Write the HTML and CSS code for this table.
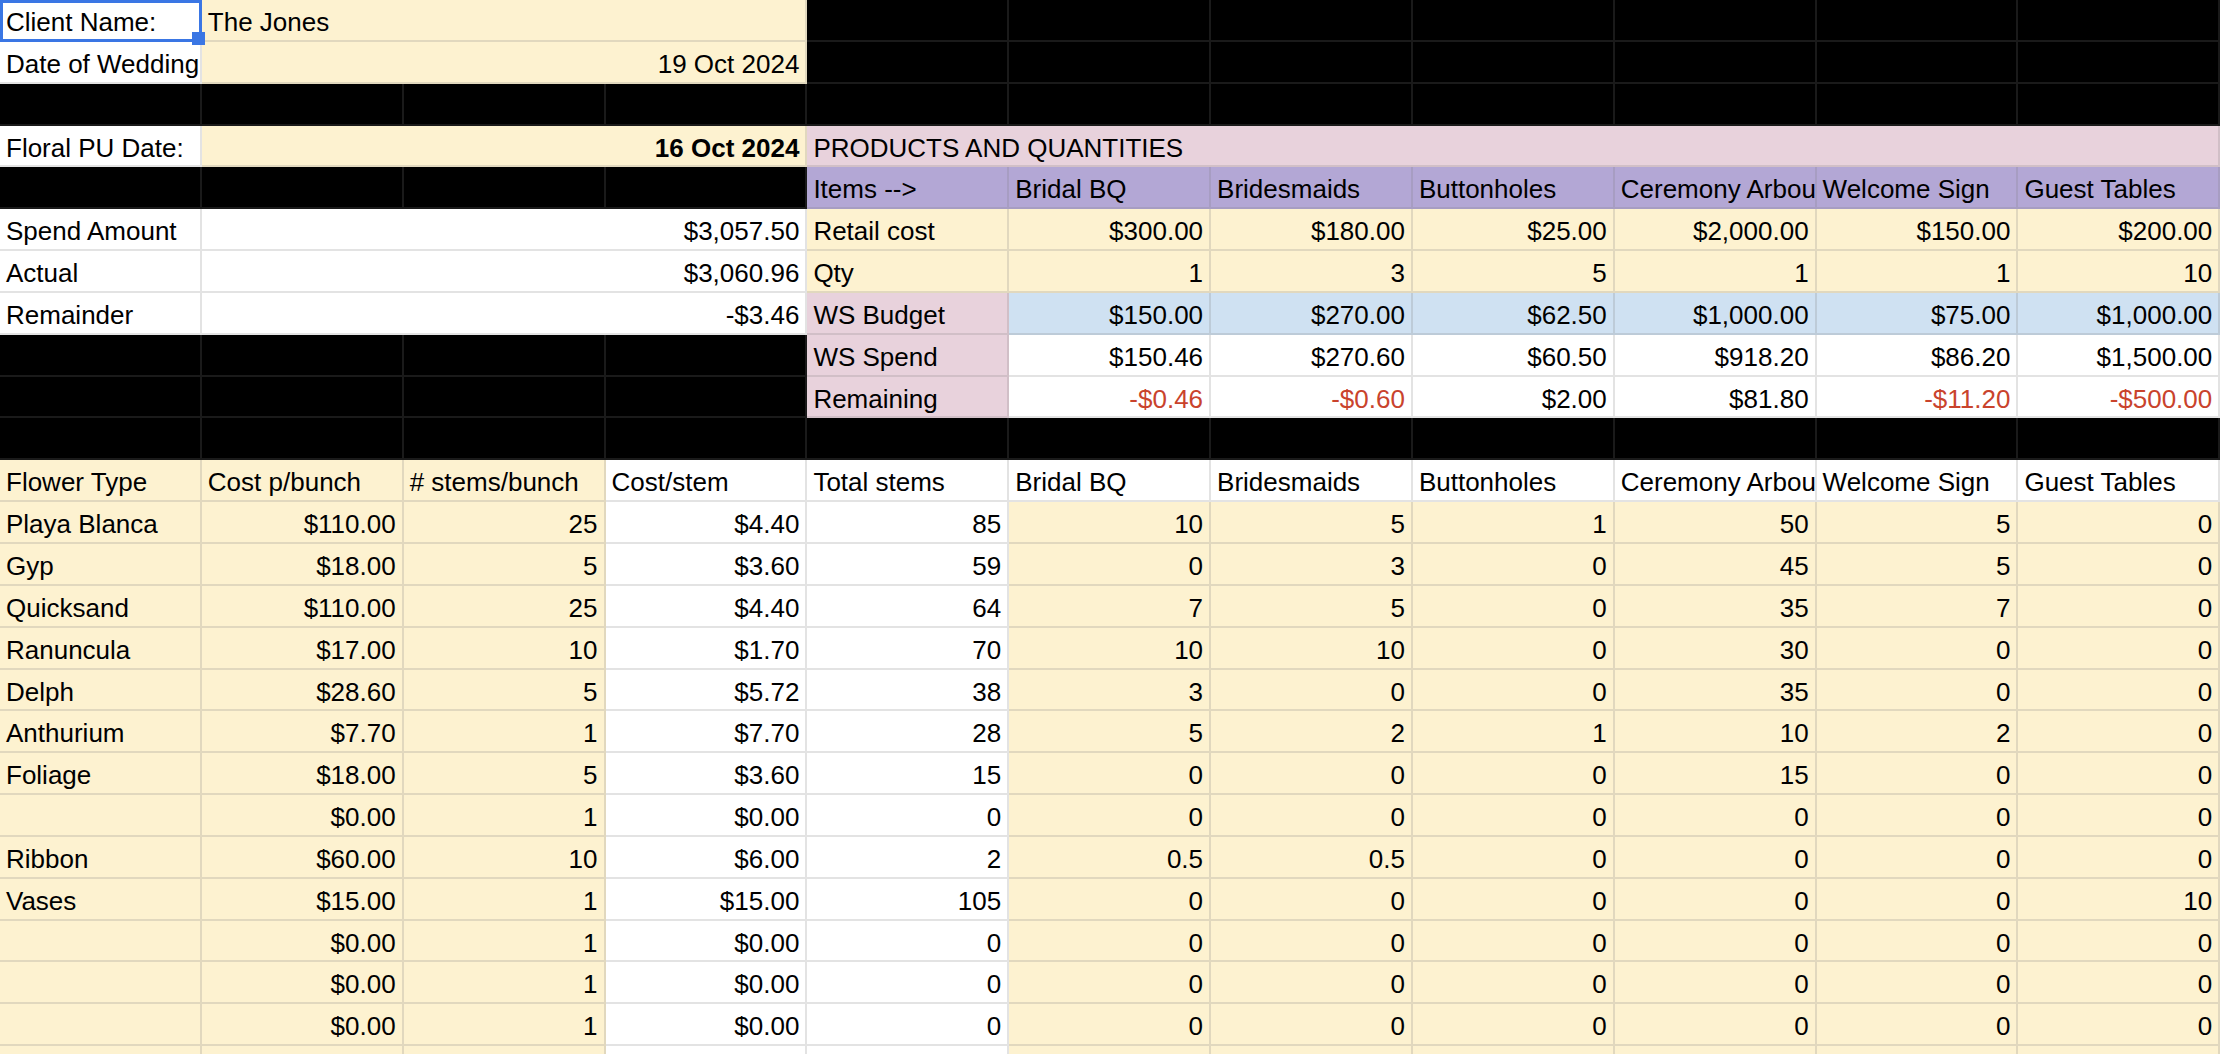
FILE: index.html
```html
<!DOCTYPE html>
<html lang="en">
<head>
<meta charset="utf-8">
<title>Wedding Floral Budget</title>
<link rel="stylesheet" href="styles.css">
</head>
<body>
<div class="sheet">
  <!-- Row 1 -->
  <div class="c w sel">Client Name:<span class="selbox"><span class="handle"></span></span></div>
  <div class="c y s3">The Jones</div>
  <div class="c x"></div><div class="c x"></div><div class="c x"></div><div class="c x"></div><div class="c x"></div><div class="c x"></div><div class="c x"></div>
  <!-- Row 2 -->
  <div class="c w">Date of Wedding</div>
  <div class="c y s3 r">19 Oct 2024</div>
  <div class="c x"></div><div class="c x"></div><div class="c x"></div><div class="c x"></div><div class="c x"></div><div class="c x"></div><div class="c x"></div>
  <!-- Row 3 -->
  <div class="c x"></div><div class="c x"></div><div class="c x"></div><div class="c x"></div><div class="c x"></div><div class="c x"></div><div class="c x"></div><div class="c x"></div><div class="c x"></div><div class="c x"></div><div class="c x"></div>
  <!-- Row 4 -->
  <div class="c w">Floral PU Date:</div>
  <div class="c y s3 r bold">16 Oct 2024</div>
  <div class="c k s7">PRODUCTS AND QUANTITIES</div>
  <!-- Row 5 -->
  <div class="c x"></div><div class="c x"></div><div class="c x"></div><div class="c x"></div>
  <div class="c p">Items --&gt;</div>
  <div class="c p">Bridal BQ</div>
  <div class="c p">Bridesmaids</div>
  <div class="c p">Buttonholes</div>
  <div class="c p">Ceremony Arbour</div>
  <div class="c p">Welcome Sign</div>
  <div class="c p">Guest Tables</div>
  <!-- Row 6 -->
  <div class="c w">Spend Amount</div>
  <div class="c w s3 r">$3,057.50</div>
  <div class="c y">Retail cost</div>
  <div class="c y r">$300.00</div><div class="c y r">$180.00</div><div class="c y r">$25.00</div><div class="c y r">$2,000.00</div><div class="c y r">$150.00</div><div class="c y r">$200.00</div>
  <!-- Row 7 -->
  <div class="c w">Actual</div>
  <div class="c w s3 r">$3,060.96</div>
  <div class="c y">Qty</div>
  <div class="c y r">1</div><div class="c y r">3</div><div class="c y r">5</div><div class="c y r">1</div><div class="c y r">1</div><div class="c y r">10</div>
  <!-- Row 8 -->
  <div class="c w">Remainder</div>
  <div class="c w s3 r">-$3.46</div>
  <div class="c k">WS Budget</div>
  <div class="c b r">$150.00</div><div class="c b r">$270.00</div><div class="c b r">$62.50</div><div class="c b r">$1,000.00</div><div class="c b r">$75.00</div><div class="c b r">$1,000.00</div>
  <!-- Row 9 -->
  <div class="c x"></div><div class="c x"></div><div class="c x"></div><div class="c x"></div>
  <div class="c k">WS Spend</div>
  <div class="c w r">$150.46</div><div class="c w r">$270.60</div><div class="c w r">$60.50</div><div class="c w r">$918.20</div><div class="c w r">$86.20</div><div class="c w r">$1,500.00</div>
  <!-- Row 10 -->
  <div class="c x"></div><div class="c x"></div><div class="c x"></div><div class="c x"></div>
  <div class="c k">Remaining</div>
  <div class="c w r neg">-$0.46</div><div class="c w r neg">-$0.60</div><div class="c w r">$2.00</div><div class="c w r">$81.80</div><div class="c w r neg">-$11.20</div><div class="c w r neg">-$500.00</div>
  <!-- Row 11 -->
  <div class="c x"></div><div class="c x"></div><div class="c x"></div><div class="c x"></div><div class="c x"></div><div class="c x"></div><div class="c x"></div><div class="c x"></div><div class="c x"></div><div class="c x"></div><div class="c x"></div>
  <!-- Row 12 -->
  <div class="c y">Flower Type</div>
  <div class="c y">Cost p/bunch</div>
  <div class="c y"># stems/bunch</div>
  <div class="c w">Cost/stem</div>
  <div class="c w">Total stems</div>
  <div class="c w">Bridal BQ</div>
  <div class="c w">Bridesmaids</div>
  <div class="c w">Buttonholes</div>
  <div class="c w">Ceremony Arbour</div>
  <div class="c w">Welcome Sign</div>
  <div class="c w">Guest Tables</div>
  <!-- Row 13 -->
  <div class="c y">Playa Blanca</div><div class="c y r">$110.00</div><div class="c y r">25</div><div class="c w r">$4.40</div><div class="c w r">85</div>
  <div class="c y r">10</div><div class="c y r">5</div><div class="c y r">1</div><div class="c y r">50</div><div class="c y r">5</div><div class="c y r">0</div>
  <!-- Row 14 -->
  <div class="c y">Gyp</div><div class="c y r">$18.00</div><div class="c y r">5</div><div class="c w r">$3.60</div><div class="c w r">59</div>
  <div class="c y r">0</div><div class="c y r">3</div><div class="c y r">0</div><div class="c y r">45</div><div class="c y r">5</div><div class="c y r">0</div>
  <!-- Row 15 -->
  <div class="c y">Quicksand</div><div class="c y r">$110.00</div><div class="c y r">25</div><div class="c w r">$4.40</div><div class="c w r">64</div>
  <div class="c y r">7</div><div class="c y r">5</div><div class="c y r">0</div><div class="c y r">35</div><div class="c y r">7</div><div class="c y r">0</div>
  <!-- Row 16 -->
  <div class="c y">Ranuncula</div><div class="c y r">$17.00</div><div class="c y r">10</div><div class="c w r">$1.70</div><div class="c w r">70</div>
  <div class="c y r">10</div><div class="c y r">10</div><div class="c y r">0</div><div class="c y r">30</div><div class="c y r">0</div><div class="c y r">0</div>
  <!-- Row 17 -->
  <div class="c y">Delph</div><div class="c y r">$28.60</div><div class="c y r">5</div><div class="c w r">$5.72</div><div class="c w r">38</div>
  <div class="c y r">3</div><div class="c y r">0</div><div class="c y r">0</div><div class="c y r">35</div><div class="c y r">0</div><div class="c y r">0</div>
  <!-- Row 18 -->
  <div class="c y">Anthurium</div><div class="c y r">$7.70</div><div class="c y r">1</div><div class="c w r">$7.70</div><div class="c w r">28</div>
  <div class="c y r">5</div><div class="c y r">2</div><div class="c y r">1</div><div class="c y r">10</div><div class="c y r">2</div><div class="c y r">0</div>
  <!-- Row 19 -->
  <div class="c y">Foliage</div><div class="c y r">$18.00</div><div class="c y r">5</div><div class="c w r">$3.60</div><div class="c w r">15</div>
  <div class="c y r">0</div><div class="c y r">0</div><div class="c y r">0</div><div class="c y r">15</div><div class="c y r">0</div><div class="c y r">0</div>
  <!-- Row 20 -->
  <div class="c y"></div><div class="c y r">$0.00</div><div class="c y r">1</div><div class="c w r">$0.00</div><div class="c w r">0</div>
  <div class="c y r">0</div><div class="c y r">0</div><div class="c y r">0</div><div class="c y r">0</div><div class="c y r">0</div><div class="c y r">0</div>
  <!-- Row 21 -->
  <div class="c y">Ribbon</div><div class="c y r">$60.00</div><div class="c y r">10</div><div class="c w r">$6.00</div><div class="c w r">2</div>
  <div class="c y r">0.5</div><div class="c y r">0.5</div><div class="c y r">0</div><div class="c y r">0</div><div class="c y r">0</div><div class="c y r">0</div>
  <!-- Row 22 -->
  <div class="c y">Vases</div><div class="c y r">$15.00</div><div class="c y r">1</div><div class="c w r">$15.00</div><div class="c w r">105</div>
  <div class="c y r">0</div><div class="c y r">0</div><div class="c y r">0</div><div class="c y r">0</div><div class="c y r">0</div><div class="c y r">10</div>
  <!-- Row 23 -->
  <div class="c y"></div><div class="c y r">$0.00</div><div class="c y r">1</div><div class="c w r">$0.00</div><div class="c w r">0</div>
  <div class="c y r">0</div><div class="c y r">0</div><div class="c y r">0</div><div class="c y r">0</div><div class="c y r">0</div><div class="c y r">0</div>
  <!-- Row 24 -->
  <div class="c y"></div><div class="c y r">$0.00</div><div class="c y r">1</div><div class="c w r">$0.00</div><div class="c w r">0</div>
  <div class="c y r">0</div><div class="c y r">0</div><div class="c y r">0</div><div class="c y r">0</div><div class="c y r">0</div><div class="c y r">0</div>
  <!-- Row 25 -->
  <div class="c y"></div><div class="c y r">$0.00</div><div class="c y r">1</div><div class="c w r">$0.00</div><div class="c w r">0</div>
  <div class="c y r">0</div><div class="c y r">0</div><div class="c y r">0</div><div class="c y r">0</div><div class="c y r">0</div><div class="c y r">0</div>
  <!-- Row 26 (partially visible) -->
  <div class="c y"></div><div class="c y r"></div><div class="c y r"></div><div class="c w r"></div><div class="c w r"></div>
  <div class="c y r"></div><div class="c y r"></div><div class="c y r"></div><div class="c y r"></div><div class="c y r"></div><div class="c y r"></div>
</div>
</body>
</html>
```
FILE: styles.css
```css
html, body {
  margin: 0;
  padding: 0;
  background: #ffffff;
  overflow: hidden;
}

body {
  width: 2220px;
  height: 1054px;
  font-family: "Liberation Sans", Arial, sans-serif;
  font-size: 26px;
  color: #000000;
}

.sheet {
  display: grid;
  grid-template-columns: repeat(11, 201.85px);
  grid-auto-rows: 41.85px;
}

.c {
  box-sizing: border-box;
  border-right: 2px solid rgba(122, 122, 122, 0.21);
  border-bottom: 2px solid rgba(122, 122, 122, 0.21);
  padding: 2px 6px 0 6px;
  line-height: 40px;
  white-space: nowrap;
  overflow: hidden;
  text-align: left;
}

.r { text-align: right; }
.bold { font-weight: bold; }
.neg { color: #c9432c; }

.s3 { grid-column: span 3; }
.s7 { grid-column: span 7; }

.w { background: #ffffff; }
.y { background: #fdf2d0; }
.p { background: #b3a7d5; }
.k { background: #e8d2dc; }
.b { background: #cfe1f2; }
.x { background: #000000; }

.sel {
  position: relative;
  overflow: visible;
  z-index: 2;
}

.selbox {
  position: absolute;
  top: 0;
  left: 0;
  right: -2px;
  bottom: -2px;
  border: 3px solid #3a76e4;
  box-sizing: border-box;
  pointer-events: none;
}

.handle {
  position: absolute;
  width: 13px;
  height: 13px;
  right: -6px;
  bottom: -6px;
  background: #3a76e4;
}
```
